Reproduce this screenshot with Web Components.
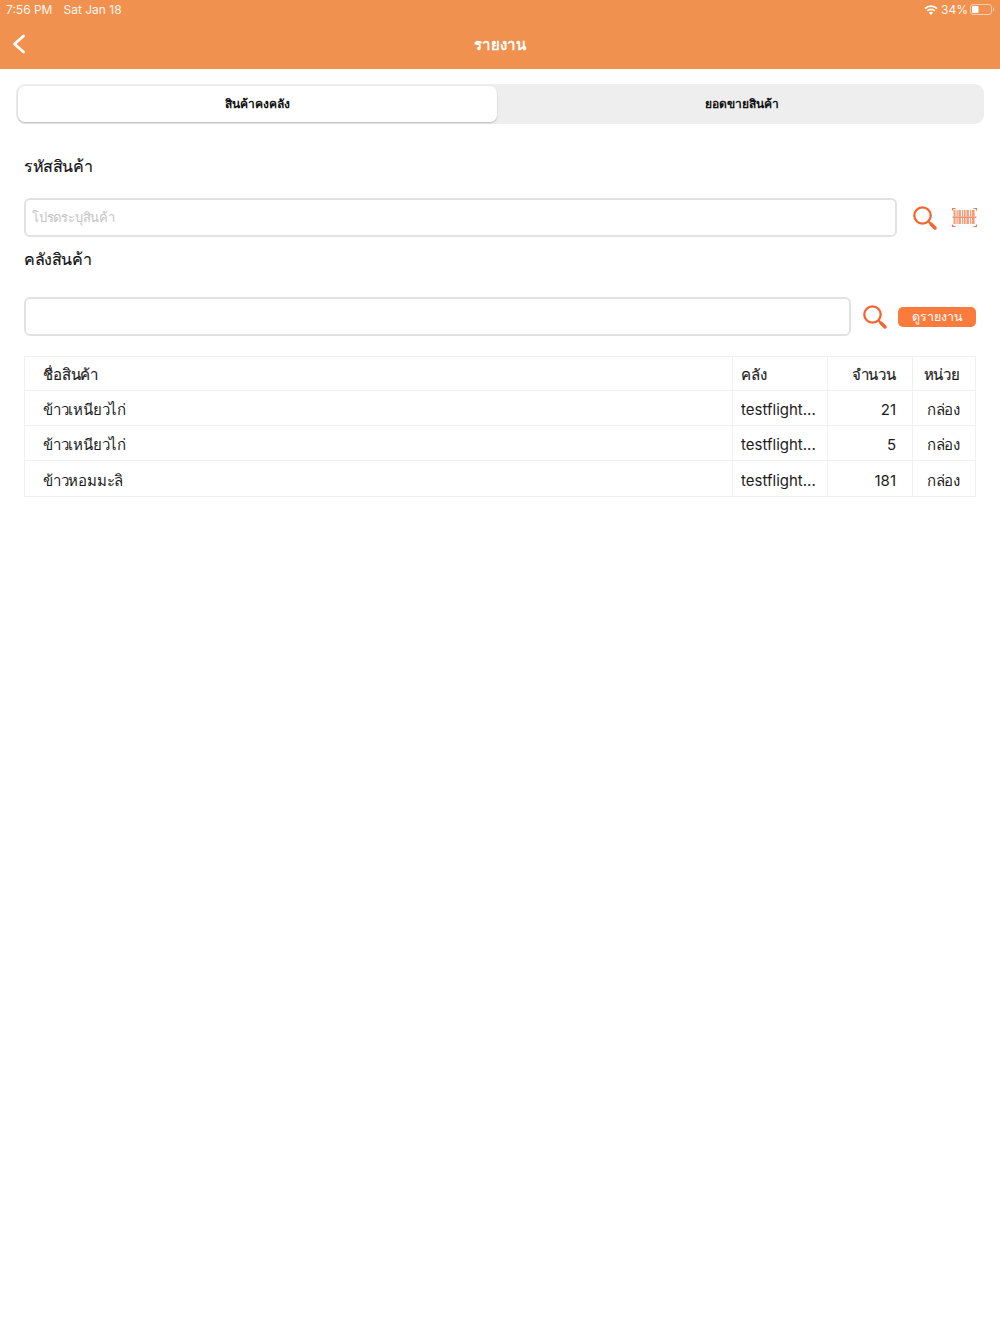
<!DOCTYPE html>
<html lang="th">
<head>
<meta charset="utf-8">
<title>รายงาน</title>
<style>
  html, body { margin: 0; padding: 0; background: #fff; }
  body { font-family: Inter, sans-serif; color: #111; }
</style>
</head>
<body>
<report-screen></report-screen>

<script>
const SEARCH_ICON = `<svg width="25" height="25" viewBox="0 0 25 25" fill="none" stroke="#f4652f">
  <circle cx="10.500" cy="10.500" r="8.200" stroke-width="2.300"/>
  <path d="M16.500 16.500l2.500 2.500" stroke-width="2"/>
  <path d="M19 19l4 4" stroke-width="3.400" stroke-linecap="round"/>
</svg>`;

class AppHeader extends HTMLElement {
    constructor() {
        super();
        this.attachShadow({ mode: 'open' });
    }

    connectedCallback() {
        this.shadowRoot.innerHTML = `
            <style>
                :host {
                    display: block;
                    height: 69px;
                    background: #f0914f;
                    color: #fff;
                }
                .status {
                    height: 19px;
                    padding: 0 5px 0 6px;
                    display: flex;
                    align-items: center;
                    justify-content: space-between;
                    font-size: 12px;
                    color: #fff6ef;
                }
                .left, .right { display: flex; align-items: center; }
                .left span:first-child { margin-right: 11px; }
                .right svg:first-child { margin-right: 3px; }
                .right span { margin-right: 2px; }
                .bar {
                    height: 50px;
                    display: grid;
                    grid-template-columns: 60px 1fr 60px;
                    align-items: center;
                }
                .back { padding: 0 0 0 12px; display: flex; }
                .title {
                    text-align: center;
                    font-size: 15px;
                    letter-spacing: .3px;
                    font-weight: 700;
                    padding-top: 1px;
                }
            </style>
            <div class="status">
                <div class="left"><span>7:56 PM</span><span>Sat Jan 18</span></div>
                <div class="right">
                    <svg width="14" height="10" viewBox="0 0 14 10" fill="#fff">
                        <path d="M7 10L4.900 7.700a3 3 0 0 1 4.200 0z"/>
                        <path d="M3.900 6.600L2.700 5.300a6.200 6.200 0 0 1 8.600 0l-1.200 1.300a4.500 4.500 0 0 0-6.200 0z"/>
                        <path d="M1.700 4.200L.4 2.900a9.600 9.600 0 0 1 13.200 0l-1.300 1.300a7.800 7.800 0 0 0-10.600 0z"/>
                    </svg>
                    <span>34%</span>
                    <svg width="25" height="11" viewBox="0 0 25 11" fill="none">
                        <rect x="0.5" y="0.5" width="21" height="10" rx="2.600" stroke="#fff" stroke-opacity=".55"/>
                        <rect x="2" y="2" width="6.500" height="7" rx="1" fill="#fff"/>
                        <path d="M23 3.600c.9.3 1.400 1 1.400 1.900S23.900 7.100 23 7.400z" fill="#fff" fill-opacity=".55"/>
                    </svg>
                </div>
            </div>
            <div class="bar">
                <div class="back">
                    <svg width="14" height="20" viewBox="0 0 14 20" fill="none" stroke="#fff" stroke-width="2.800" stroke-linecap="round" stroke-linejoin="round">
                        <path d="M11.500 2L2.500 10l9 8"/>
                    </svg>
                </div>
                <div class="title"><slot></slot></div>
                <div></div>
            </div>
        `;
    }
}

class SegmentTabs extends HTMLElement {
    constructor() {
        super();
        this.attachShadow({ mode: 'open' });
    }

    connectedCallback() {
        const tabs = this.getAttribute('tabs').split(',');
        this.shadowRoot.innerHTML = `
            <style>
                :host {
                    display: grid;
                    grid-template-columns: 479px 1fr;
                    height: 40px;
                    box-sizing: border-box;
                    padding: 2px;
                    margin: 15px 16px 0;
                    background: #eeeeee;
                    border-radius: 9px;
                }
                .tab {
                    display: flex;
                    align-items: center;
                    justify-content: center;
                    font-size: 12px;
                    font-weight: 700;
                    color: #111;
                    border-radius: 7px;
                    padding-bottom: 1px;
                }
                .tab:not(.active) { padding-left: 5px; }
                .tab.active {
                    background: #fff;
                    box-shadow: 0 1px 2px rgba(0, 0, 0, .22);
                }
            </style>
            ${tabs.map((t, i) => `<div class="tab ${i === 0 ? 'active' : ''}">${t}</div>`).join('')}
        `;
    }
}

class SearchField extends HTMLElement {
    constructor() {
        super();
        this.attachShadow({ mode: 'open' });
    }

    connectedCallback() {
        const placeholder = this.getAttribute('placeholder') || '';
        this.shadowRoot.innerHTML = `
            <style>
                :host {
                    display: flex;
                    align-items: center;
                    padding: 0 24px;
                    height: 39px;
                }
                input {
                    flex: 1;
                    min-width: 0;
                    height: 39px;
                    box-sizing: border-box;
                    border: 2px solid #e2e2e2;
                    border-radius: 6px;
                    padding: 0 6px 2px;
                    font: 13px Inter, sans-serif;
                    letter-spacing: -0.2px;
                    outline: none;
                }
                input::placeholder { color: #c4c4c4; opacity: 1; }
                .actions { display: flex; align-items: center; }
            </style>
            <input type="text" placeholder="${placeholder}">
            <div class="actions"><slot></slot></div>
        `;
    }
}

class DataTable extends HTMLElement {
    constructor() {
        super();
        this.attachShadow({ mode: 'open' });
    }

    connectedCallback() {
        const rows = [
            ['ข้าวเหนียวไก่', 'testflight...', '21', 'กล่อง'],
            ['ข้าวเหนียวไก่', 'testflight...', '5', 'กล่อง'],
            ['ข้าวหอมมะลิ', 'testflight...', '181', 'กล่อง'],
        ];
        const head = ['ชื่อสินค้า', 'คลัง', 'จำนวน', 'หน่วย'];
        const cells = r => r.map(c => `<div class="c">${c}</div>`).join('');
        this.shadowRoot.innerHTML = `
            <style>
                :host {
                    display: block;
                    margin: 20px 24px 0;
                    border: 1px solid #f0f0f0;
                    border-bottom: none;
                    font-size: 15px;
                    color: #1c1c1c;
                }
                .row {
                    display: grid;
                    grid-template-columns: 707px 95px 85px 1fr;
                    height: 35px;
                    border-bottom: 1px solid #f0f0f0;
                    box-sizing: border-box;
                }
                .row.h { height: 34px; }
                .row:last-child { height: 36px; }
                .c {
                    display: flex;
                    align-items: center;
                    border-left: 1px solid #f0f0f0;
                    white-space: nowrap;
                    padding-top: 3px;
                }
                .c:nth-child(1) { padding-left: 18px; border-left: none; }
                .c:nth-child(2) { padding-left: 8px; }
                .c:nth-child(3) { justify-content: flex-end; padding-right: 16px; }
                .c:nth-child(4) { justify-content: flex-end; padding-right: 15px; }
                .row:not(.h) .c:nth-child(1),
                .row:not(.h) .c:nth-child(4) { padding-top: 4px; letter-spacing: -.2px; }
                .row.h .c { padding-top: 3px; letter-spacing: -.15px; -webkit-text-stroke: .15px; }
            </style>
            <div class="row h">${cells(head)}</div>
            ${rows.map(r => `<div class="row">${cells(r)}</div>`).join('')}
        `;
    }
}

class ReportScreen extends HTMLElement {
    constructor() {
        super();
        this.attachShadow({ mode: 'open' });
    }

    connectedCallback() {
        // bar x positions of the barcode, above and below the scan line
        const bars = [[1.5, 2], [4.5, 1.2], [6.5, 2.4], [10, 1.2], [12, 1.6], [14.5, 2.4], [18, 1.2], [20, 2.6]];
        const barRects = bars.map(([x, w]) =>
            `<rect x="${x}" y="3" width="${w}" height="6.500"/><rect x="${x}" y="11" width="${w}" height="6"/>`
        ).join('');
        this.shadowRoot.innerHTML = `
            <style>
                :host {
                    display: block;
                    width: 1000px;
                    height: 1334px;
                    overflow: hidden;
                    background: #fff;
                }
                .label {
                    padding: 0 24px;
                    font-size: 16px;
                    letter-spacing: -.4px;
                    -webkit-text-stroke: .15px;
                    color: #111;
                    line-height: 22px;
                }
                .l1 { margin-top: 31px; margin-bottom: 21px; }
                .l2 { margin-top: 11px; margin-bottom: 27px; }
                .icon { display: flex; }
                .i1 { margin-left: 15px; }
                .i2 { margin-left: 15px; margin-right: -1px; }
                .i3 { margin-left: 11px; }
                .btn {
                    margin-left: 11px;
                    width: 78px;
                    height: 20px;
                    background: #fb7b3d;
                    color: #fff;
                    border-radius: 5px;
                    font-size: 12.500px;
                    display: flex;
                    align-items: center;
                    justify-content: center;
                }
            </style>
            <app-header>รายงาน</app-header>
            <segment-tabs tabs="สินค้าคงคลัง,ยอดขายสินค้า"></segment-tabs>
            <div class="label l1">รหัสสินค้า</div>
            <search-field placeholder="โปรดระบุสินค้า">
                <div style="display:flex;align-items:center">
                    <span class="icon i1">${SEARCH_ICON}</span>
                    <span class="icon i2">
                        <svg width="25" height="21" viewBox="0 0 25 21" fill="none">
                            <g fill="#f79a76">${barRects}</g>
                            <path d="M.5 3.500V1.500h3M21.500 1.500h3v2M.5 17.500v2h3M21.500 19.500h3v-2" stroke="#f4754a" stroke-width="1.200"/>
                            <path d="M.5 10.200h24" stroke="#f4754a" stroke-width="1.200"/>
                        </svg>
                    </span>
                </div>
            </search-field>
            <div class="label l2">คลังสินค้า</div>
            <search-field>
                <div style="display:flex;align-items:center">
                    <span class="icon i3">${SEARCH_ICON}</span>
                    <div class="btn">ดูรายงาน</div>
                </div>
            </search-field>
            <data-table></data-table>
        `;
    }
}

customElements.define('app-header', AppHeader);
customElements.define('segment-tabs', SegmentTabs);
customElements.define('search-field', SearchField);
customElements.define('data-table', DataTable);
customElements.define('report-screen', ReportScreen);
</script>
</body>
</html>
